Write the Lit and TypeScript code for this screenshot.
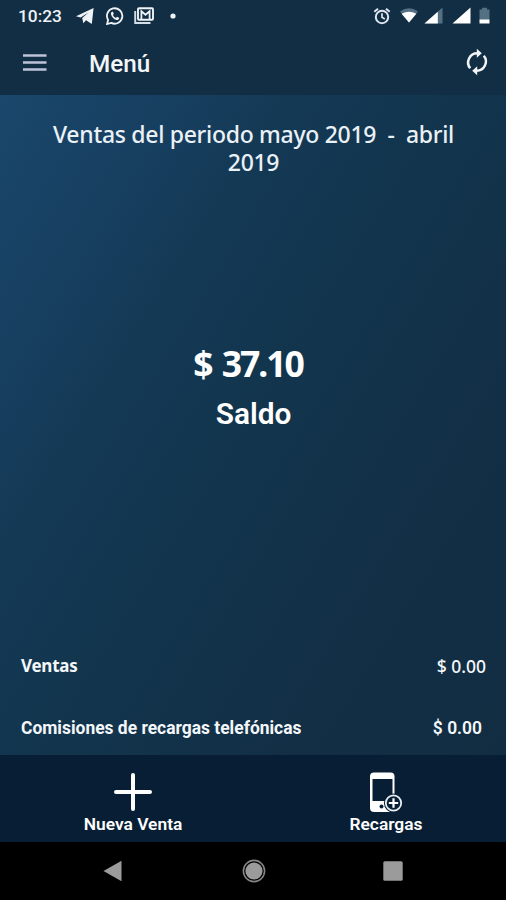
import { LitElement, html, css } from "lit";
import { customElement } from "lit/decorators.js";

@customElement("status-bar")
class StatusBar extends LitElement {
  static styles = css`
    :host {
      display: flex;
      align-items: center;
      justify-content: space-between;
      height: 32px;
      padding: 0 16px 0 18px;
      color: #eef3f7;
    }
    svg {
      display: block;
      flex: none;
    }
    .side {
      display: flex;
      align-items: center;
    }
    .clock {
      width: 58px;
      font: 500 17.3px/32px Roboto, sans-serif;
    }
    .telegram { margin-right: 12px; }
    .whatsapp { margin-right: 10px; }
    .mail { margin-right: 16px; }
    .alarm { margin-right: 8px; }
    .wifi { margin-right: 5px; }
    .signal { margin-right: 9px; }
    .full { margin-right: 8px; }
  `;

  render() {
    return html`
      <div class="side">
        <span class="clock">10:23</span>
        <svg class="telegram" width="18" height="18" viewBox="0 0 18 18">
          <path d="M0 9.2 17.6 1 15.8 17 10 13.2 7.3 16.2 6.2 11 12.5 5.6 4.6 10.6Z" fill="#eef3f7"/>
        </svg>
        <svg class="whatsapp" width="18" height="18" viewBox="0 0 18 18">
          <path d="M1.1 17 2.1 13A7.7 7.7 0 1 1 5.3 15.9Z" fill="none" stroke="#eef3f7" stroke-width="1.8"/>
          <path d="M6.1 4.7c-.8.3-1.4 1.3-1.1 2.5.7 2.8 2.7 4.9 5.4 5.8 1.3.4 2.5-.3 2.8-1.4l-.2-.9-2-.9-1.1 1.1C8.4 10.3 7.5 9.3 7 8l.8-1.2-.9-2Z" fill="#eef3f7"/>
        </svg>
        <svg class="mail" width="20" height="18" viewBox="0 0 20 18">
          <path d="M1.2 4V16H16.5" fill="none" stroke="#d5dee5" stroke-width="1.9"/>
          <rect x="4" y="1.2" width="15" height="11.6" rx="1" fill="none" stroke="#eef3f7" stroke-width="1.9"/>
          <path d="M7.4 12V4.3L11.5 7.8 15.6 4.3V12" fill="none" stroke="#eef3f7" stroke-width="1.8"/>
        </svg>
        <svg width="6" height="6" viewBox="0 0 6 6"><circle cx="3" cy="3" r="2.6" fill="#eef3f7"/></svg>
      </div>
      <div class="side">
        <svg class="alarm" width="18" height="18" viewBox="0 0 18 18" fill="none" stroke="#dfe6f0">
          <circle cx="9" cy="10" r="6.2" stroke-width="2"/>
          <path d="M1.3 4.8 5 1.7M16.7 4.8 13 1.7" stroke-width="2"/>
          <path d="M9 6.3V10.3L11.8 12" stroke-width="1.7"/>
        </svg>
        <svg class="wifi" width="20" height="18" viewBox="0 0 20 18">
          <path d="M1 4.5Q10-1.9 19 4.5L10 15.5Z" fill="#567083"/>
          <path d="M2.6 6.8Q10 2.6 17.4 6.8L10 15.5Z" fill="#fff"/>
        </svg>
        <svg class="signal" width="19" height="18" viewBox="0 0 19 18">
          <path d="M0.5 16.5 18.5 0.5V16.5Z" fill="#567083"/>
          <path d="M0.5 16.5 13.8 4.7V16.5Z" fill="#fff"/>
        </svg>
        <svg class="full" width="19" height="18" viewBox="0 0 19 18">
          <path d="M0.5 16.5 18.5 0.5V16.5Z" fill="#fff"/>
        </svg>
        <svg width="11" height="18" viewBox="0 0 11 18">
          <path d="M0.5 2.5H3V0.8H8V2.5H10.5V13H0.5Z" fill="#567083"/>
          <path d="M0.5 12.5H10.5V16.5H0.5Z" fill="#fff"/>
        </svg>
      </div>
    `;
  }
}

@customElement("tool-bar")
class ToolBar extends LitElement {
  static styles = css`
    :host {
      display: flex;
      align-items: center;
      height: 63px;
      padding: 0 15px 0 23px;
      box-sizing: border-box;
    }
    svg { display: block; margin-bottom: 3px; }
    .title {
      flex: 1;
      margin-left: 42px;
      font: 500 24.3px/63px Roboto, sans-serif;
      color: #f3f6f9;
    }
  `;

  render() {
    return html`
      <svg width="24" height="20" viewBox="0 0 24 20">
        <path d="M0 3.5H23.5M0 10.5H23.5M0 17.5H23.5" stroke="#bfc3d9" stroke-width="2.5"/>
      </svg>
      <span class="title">Menú</span>
      <svg width="28" height="28" viewBox="0 0 28 28" fill="none" stroke="#f1f5f8" stroke-width="2.5">
        <path d="M7.2 20.3A9.2 9.2 0 0 1 14.5 5.3M20.8 7.7A9.2 9.2 0 0 1 13.5 22.7"/>
        <path d="M13.8 0.8 18.8 5.3 13.8 9.8ZM14.2 18.2 9.2 22.7 14.2 27.2Z" fill="#f1f5f8" stroke="none"/>
      </svg>
    `;
  }
}

@customElement("app-root")
class AppRoot extends LitElement {
  static styles = css`
    :host {
      display: flex;
      flex-direction: column;
      width: 506px;
      height: 900px;
      overflow: hidden;
      background: #000;
      color: #f4f7fa;
      font-family: Roboto, sans-serif;
    }
    svg { display: block; }
    .top {
      height: 95px;
      background: #112e44;
    }
    .body {
      display: flex;
      flex-direction: column;
      height: 660px;
      background: linear-gradient(122deg, #1a476b 0%, #174062 16%, #143955 32%, #12354d 50%, #122f46 75%, #122d42 100%);
    }
    .period {
      height: 84px;
      padding: 25px 0 0 1px;
      box-sizing: border-box;
      text-align: center;
      white-space: pre;
      font: 500 23px/28px "Noto Sans", sans-serif;
      letter-spacing: -0.3px;
      color: #eaf1f6;
    }
    .balance {
      flex: 1;
      padding-top: 159px;
      text-align: center;
    }
    .amount {
      margin-right: 10px;
      font: 700 35.5px/50px "Noto Sans", sans-serif;
      letter-spacing: -2px;
      word-spacing: 3px;
      color: #fff;
    }
    .label {
      padding-left: 1px;
      font: 600 29.8px/51px Roboto, sans-serif;
      color: #fff;
    }
    .row {
      display: flex;
      justify-content: space-between;
      align-items: center;
      padding: 0 20px 0 21px;
    }
    .name { font-weight: 700; }
    .value { font-weight: 500; }
    .row.sales {
      height: 67px;
      font-family: "Noto Sans", sans-serif;
      font-size: 17.5px;
    }
    .row.sales .name {
      font-size: 17px;
      letter-spacing: -0.25px;
    }
    .row.fees {
      height: 54px;
      padding: 2px 24px 0 21px;
      font-size: 17.45px;
    }
    .row.fees .value { font-weight: 600; }
    .actions {
      display: grid;
      grid-template-columns: 1fr 1fr;
      height: 87px;
      background: #071e35;
    }
    .action {
      display: flex;
      flex-direction: column;
      align-items: center;
      padding: 17px 0 0 13px;
      font: 600 17.4px/25px Roboto, sans-serif;
      color: #fff;
    }
    .nav {
      display: grid;
      grid-template-columns: 122px 120px 24px 137px 103px;
      align-items: center;
      height: 58px;
      background: #000;
    }
    .back { grid-column: 1; justify-self: end; }
    .home { grid-column: 3; justify-self: center; }
    .recent { grid-column: 4; justify-self: end; }
  `;

  render() {
    return html`
      <div class="top">
        <status-bar></status-bar>
        <tool-bar></tool-bar>
      </div>
      <div class="body">
        <div class="period">Ventas del periodo mayo 2019  -  abril
2019</div>
        <div class="balance">
          <div class="amount">$ 37.10</div>
          <div class="label">Saldo</div>
        </div>
        <div class="row sales"><span class="name">Ventas</span><span class="value">$ 0.00</span></div>
        <div class="row fees"><span class="name">Comisiones de recargas telefónicas</span><span class="value">$ 0.00</span></div>
      </div>
      <div class="actions">
        <div class="action">
          <svg width="40" height="40" viewBox="0 0 40 40">
            <path d="M20 3V37M3 20H37" stroke="#fff" stroke-width="4" stroke-linecap="round"/>
          </svg>
          <span>Nueva Venta</span>
        </div>
        <div class="action">
          <svg width="40" height="40" viewBox="0 0 40 40">
            <rect x="4" y="0.5" width="24.5" height="39.5" rx="4" fill="#fff"/>
            <path d="M6.5 7H26.5V29H6.5Z" fill="#071e35"/>
            <circle cx="15.5" cy="34.5" r="2" fill="#071e35"/>
            <circle cx="27.5" cy="31" r="9.6" fill="#071e35"/>
            <circle cx="27.5" cy="31" r="7.7" fill="none" stroke="#e8edf2" stroke-width="1.8"/>
            <path d="M27.5 26.3V35.7M22.8 31H32.2" stroke="#fff" stroke-width="2.2"/>
          </svg>
          <span>Recargas</span>
        </div>
      </div>
      <div class="nav">
        <svg class="back" width="19" height="22" viewBox="0 0 19 22"><path d="M0.5 11 18.5 0.8V21.2Z" fill="#9b9b9b"/></svg>
        <svg class="home" width="24" height="24" viewBox="0 0 24 24">
          <circle cx="12" cy="12" r="10.6" fill="none" stroke="#858585" stroke-width="1.6"/>
          <circle cx="12" cy="12" r="8.6" fill="#9b9b9b"/>
        </svg>
        <svg class="recent" width="20" height="20" viewBox="0 0 20 20"><rect x="0.3" y="0.3" width="19.4" height="19.4" rx="1.5" fill="#9b9b9b"/></svg>
      </div>
    `;
  }
}
